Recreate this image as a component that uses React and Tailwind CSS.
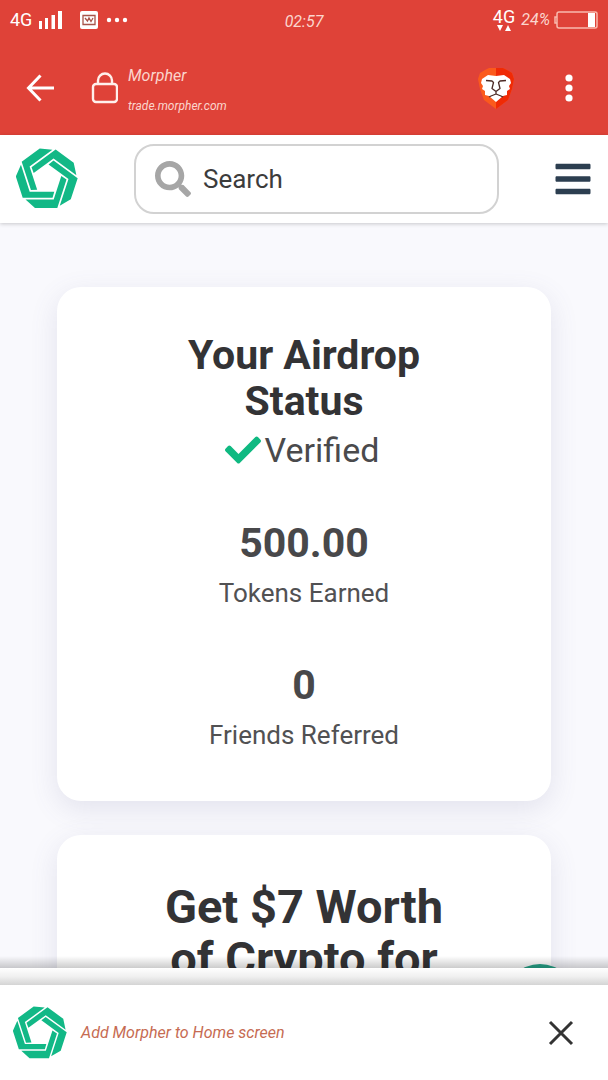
import { FaBars, FaCheck, FaSearch } from "react-icons/fa";

const stats = [
  { value: "500.00", label: "Tokens Earned" },
  { value: "0", label: "Friends Referred" },
];

const blades = [0, 72, 144, 216, 288];

function MorpherLogo({ className }) {
  return (
    <svg viewBox="-31 -31 62 62" className={className} aria-hidden="true">
      {blades.map((angle) => (
        <path
          key={angle}
          transform={`rotate(${angle})`}
          fill="#12b886"
          d="M-21.500 20.400H6.700L14.300 -3L19.500 .5L10.300 28.900H-12Z"
        />
      ))}
    </svg>
  );
}

function BraveIcon() {
  return (
    <svg viewBox="0 0 38 44" className="h-11 w-[38px]" aria-hidden="true">
      <path fill="#fb5a1c" d="M12 2h14l4 2 5 3 2 6-2 10-4 11-12 9-12-9L3 23 1 13l2-6 5-3z" />
      <path fill="#f02a05" d="M19 2h7l4 2 5 3 2 6-2 10-4 11-12 9z" />
      <path
        fill="#fff"
        d="M11 9l8 1 8-1 6 4 1 4-2 3 1 3-3 2v4l-4 1-7 6-7-6-4-1v-4l-3-2 1-3-2-3 1-4z"
      />
      <path
        fill="none"
        stroke="#4c2a25"
        strokeWidth="1.300"
        strokeLinejoin="round"
        d="M9 14.500l6 .5 1.500 1.500-1.500 6 4 3 4-3-1.500-6 1.500-1.500 6-.5M19 25.500v3M12 31l2-1 5-2 5 2 2 1"
      />
    </svg>
  );
}

function StatusBar() {
  return (
    <div className="grid h-10 shrink-0 grid-cols-3 items-center px-[10px] text-white">
      <div className="flex items-center">
        <span className="font-['Roboto'] text-lg">4G</span>
        <svg viewBox="0 0 26 20" className="ml-1.5 h-5 w-[26px]" fill="currentColor" aria-hidden="true">
          <path d="M1 11h3v8H1zM7 8h3v11H7zM13.500 5H17v14h-3.500zM20 1h4v18h-4z" />
        </svg>
        <svg viewBox="0 0 18 18" className="ml-4 size-[18px]" aria-hidden="true">
          <rect width="18" height="18" rx="2" fill="#fff" />
          <path d="M3 4.500h12v9H3zM5 7l2.500 3L9 7l2 3.500L13 7" fill="none" stroke="#a8544a" strokeWidth="1.300" />
        </svg>
        <svg viewBox="0 0 22 6" className="ml-2 h-1.5 w-[22px]" fill="currentColor" aria-hidden="true">
          <circle cx="3" cy="3" r="2.200" />
          <circle cx="11" cy="3" r="2.200" />
          <circle cx="19" cy="3" r="2.200" />
        </svg>
      </div>
      <span className="pt-1 text-center font-['Roboto',sans-serif] text-base italic text-[#fbd5cd]">
        02:57
      </span>
      <div className="flex items-center justify-end">
        <div className="flex flex-col items-center">
          <span className="font-['Roboto'] text-lg leading-4">4G</span>
          <svg viewBox="0 0 14 7" className="h-[7px] w-[18px]" fill="currentColor" aria-hidden="true">
            <path d="M0 0h6L3 6zM8 6h6L11 0z" />
          </svg>
        </div>
        <span className="ml-1.5 font-['Roboto',sans-serif] text-base italic text-[#fbd5cd]">
          24%
        </span>
        <svg viewBox="0 0 44 18" className="ml-1 h-[18px] w-11" fill="none" aria-hidden="true">
          <path d="M3 6H1v6h2M5 1h36q2 0 2 2v12q0 2-2 2H5q-2 0-2-2V3q0-2 2-2z" stroke="#f9b9ad" strokeWidth="1.500" />
          <path d="M34 2h7v14h-7z" fill="#fff" />
        </svg>
      </div>
    </div>
  );
}

function BrowserBar() {
  return (
    <div className="flex h-[95px] shrink-0 items-center pl-[26px] pr-[29px] text-white">
      <button aria-label="Back">
        <svg viewBox="0 0 28 28" className="size-7" fill="none" stroke="currentColor" strokeWidth="3" aria-hidden="true">
          <path d="M14.500 1.500L2.500 14l12 12.500M2.500 14H28" />
        </svg>
      </button>
      <svg viewBox="0 0 28 32" className="ml-9 h-8 w-7" fill="none" stroke="#fff0ec" strokeWidth="2.400" aria-hidden="true">
        <rect x="3" y="12" width="24" height="18" rx="3" />
        <path d="M8 12V8.500a7 7 0 0 1 14 0V12" />
      </svg>
      <div className="ml-2.5 flex-1 pt-2 font-['Roboto',sans-serif] italic text-[#fbd5cd]">
        <p className="text-base leading-7">Morpher</p>
        <p className="text-xs leading-8">trade.morpher.com</p>
      </div>
      <button aria-label="Brave Shields">
        <BraveIcon />
      </button>
      <button className="ml-11" aria-label="More options">
        <svg viewBox="0 0 20 28" className="h-7 w-5" fill="currentColor" aria-hidden="true">
          <circle cx="10" cy="4" r="3.600" />
          <circle cx="10" cy="14" r="3.600" />
          <circle cx="10" cy="24" r="3.600" />
        </svg>
      </button>
    </div>
  );
}

function SiteHeader() {
  return (
    <header className="relative z-10 flex h-[88px] shrink-0 items-center bg-white pl-4 pr-[15px] shadow-[0_1px_4px_rgba(0,0,0,0.2)]">
      <a href="#" aria-label="Morpher">
        <MorpherLogo className="size-[62px]" />
      </a>
      <label className="ml-14 mr-[54px] flex h-[70px] min-w-0 flex-1 items-center gap-3 rounded-[20px] border-2 border-[#d2d2d2] px-[19px]">
        <FaSearch className="size-9 shrink-0 text-[#a6a6a6]" aria-hidden="true" />
        <input
          type="text"
          aria-label="Search"
          placeholder="Search"
          className="w-full min-w-0 bg-transparent text-[26px] outline-none placeholder:text-[#3c3c3c]"
        />
      </label>
      <button aria-label="Menu">
        <FaBars className="size-10 text-[#2c3e50]" />
      </button>
    </header>
  );
}

function Card({ children }) {
  return (
    <section className="rounded-3xl bg-white px-24 text-center shadow-[0_8px_28px_rgba(90,90,140,0.14)]">
      {children}
    </section>
  );
}

export default function App() {
  return (
    <div className="flex h-screen flex-col overflow-hidden bg-white font-['Roboto',sans-serif]">
      <div className="shrink-0 bg-[#df4238]">
        <StatusBar />
        <BrowserBar />
      </div>
      <SiteHeader />

      <main className="relative min-h-0 flex-1 overflow-hidden bg-[#f9f9fd] px-[57px] pt-16">
        <Card>
          <div className="pb-[39px] pt-[45px]">
            <h1 className="text-[41px] font-bold leading-[46px] text-[#333335]">Your Airdrop Status</h1>
            <p className="flex items-center justify-center gap-1 pr-1 text-[34px] leading-[52px] text-[#4a4a4c]">
              <FaCheck className="size-9 text-[#0fb981]" aria-hidden="true" />
              Verified
            </p>
            <dl className="flex flex-col gap-[42px] pt-11">
              {stats.map((stat) => (
                <div key={stat.label} className="flex flex-col-reverse">
                  <dt className="text-[26px] leading-[54px] text-[#515153]">{stat.label}</dt>
                  <dd className="text-[41px] font-bold leading-[46px] text-[#48484a]">{stat.value}</dd>
                </div>
              ))}
            </dl>
          </div>
        </Card>

        <div className="mt-[34px]">
          <Card>
            <h2 className="py-[46px] text-[47px] font-bold leading-[52px] text-[#333335]">
              Get $7 Worth of Crypto for
            </h2>
          </Card>
        </div>

        <button
          className="absolute -bottom-[68px] right-8 size-[72px] rounded-full bg-[#26a489]"
          aria-label="Open chat"
        />
        <div className="absolute inset-x-0 bottom-0 h-3 bg-linear-to-b from-transparent to-black/20" />
      </main>

      <div className="h-[17px] shrink-0 bg-linear-to-b from-white via-[#f0f0f0] to-[#d4d4d4]" />
      <footer className="flex h-[95px] shrink-0 items-center bg-white pl-[13px] pr-8">
        <button className="flex flex-1 items-center gap-3.5">
          <MorpherLogo className="size-[54px]" />
          <span className="font-['Roboto',sans-serif] text-base italic text-[#c66b52]">
            Add Morpher to Home screen
          </span>
        </button>
        <button aria-label="Close">
          <svg viewBox="0 0 30 30" className="size-[30px]" stroke="#333" strokeWidth="3" aria-hidden="true">
            <path d="M4 4l22 22M26 4L4 26" />
          </svg>
        </button>
      </footer>
    </div>
  );
}
